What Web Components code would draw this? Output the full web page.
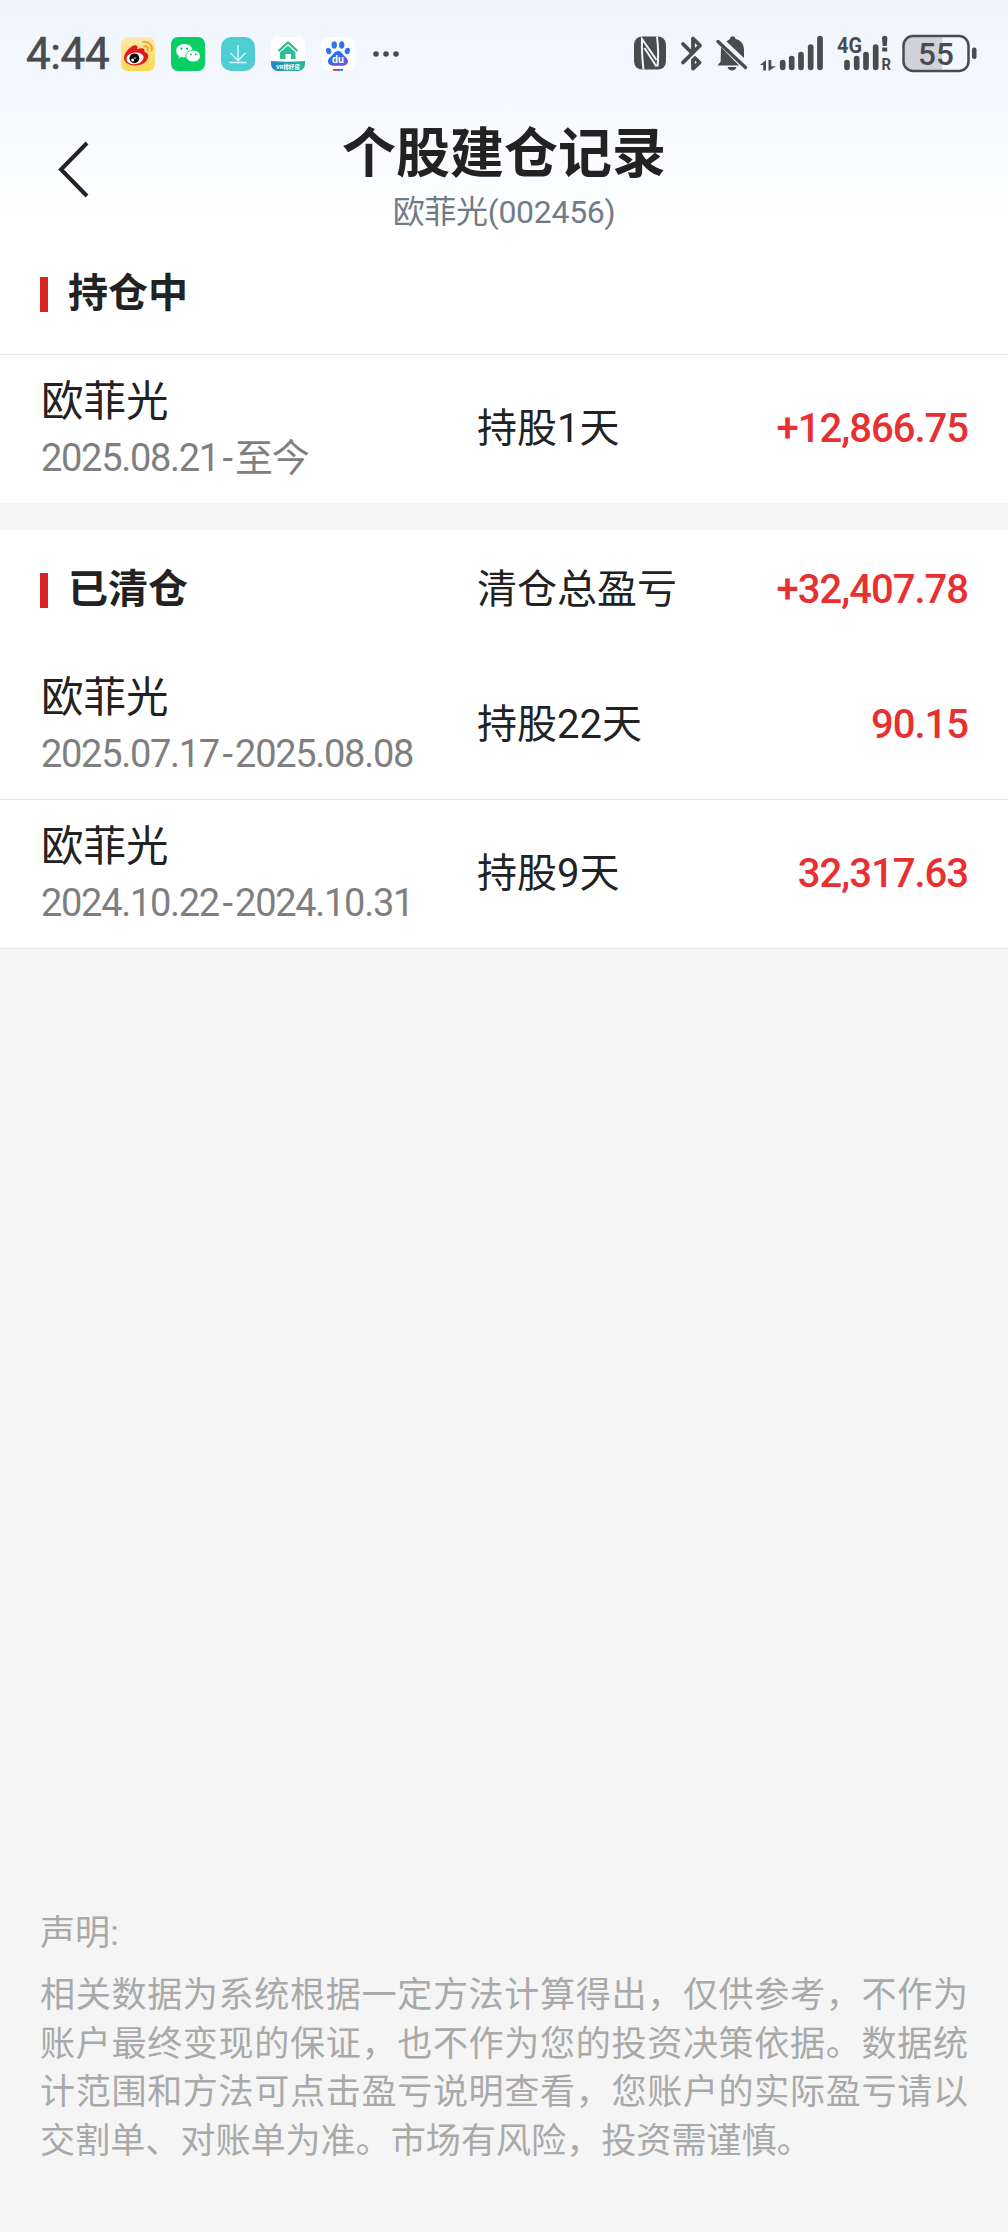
<!DOCTYPE html>
<html lang="zh-CN">
<head>
<meta charset="utf-8">
<title>个股建仓记录</title>
<style>
	body {
		margin: 0;
		background: #f5f5f5;
		color: #222;
		font-family: Roboto, 'Noto Sans CJK SC', sans-serif;
	}
</style>
</head>
<body>
<record-page>
	<status-bar slot="top" time="4:44" battery="55"></status-bar>
	<nav-bar slot="top" heading="个股建仓记录">欧菲光(002456)</nav-bar>

	<record-section heading="持仓中">
		<record-row class="ruled" name="欧菲光" period="2025.08.21-至今" days="持股1天" amount="+12,866.75"></record-row>
	</record-section>

	<record-section heading="已清仓" label="清仓总盈亏" total="+32,407.78">
		<record-row name="欧菲光" period="2025.07.17-2025.08.08" days="持股22天" amount="90.15"></record-row>
		<record-row class="ruled" name="欧菲光" period="2024.10.22-2024.10.31" days="持股9天" amount="32,317.63"></record-row>
	</record-section>

	<legal-note slot="bottom" heading="声明:">相关数据为系统根据一定方法计算得出，仅供参考，不作为账户最终变现的保证，也不作为您的投资决策依据。数据统计范围和方法可点击盈亏说明查看，您账户的实际盈亏请以交割单、对账单为准。市场有风险，投资需谨慎。</legal-note>
</record-page>

<script>
const APP_ICONS = {
	weibo: `
		<defs><linearGradient id="g" x2="0" y2="1"><stop stop-color="#fdeab0"/><stop offset="1" stop-color="#fdd651"/></linearGradient></defs>
		<rect width="34" height="34" rx="7" fill="url(#g)"/>
		<path d="M3 21C3 16 9 9.500 13 8.500c3-.7 4 1 3.300 3.700 4-1.700 8-1.200 7.200 2.600 3 .8 4.300 3.200 3.600 5.700C26 25.500 20 28.500 14 28.500 8 28.500 3 25.500 3 21Z" fill="#df1a1c"/>
		<ellipse cx="14" cy="21.300" rx="8.700" ry="5.800" transform="rotate(-8 14 21.300)" fill="#fff"/>
		<circle cx="13.400" cy="21.300" r="4.900" fill="#0d0909"/>
		<circle cx="11.700" cy="22.900" r="1.500" fill="#fff"/><circle cx="14.100" cy="21" r=".8" fill="#fff"/>
		<path d="M22.500 4.900c5.500-.6 9.200 3.500 8.200 8.700M23.200 9.200c2.900-.3 4.300 1.500 3.800 4" fill="none" stroke="#f3a52b" stroke-width="2" stroke-linecap="round"/>`,
	wechat: `
		<rect width="34" height="34" rx="7" fill="#07cf63"/>
		<path d="M13.300 7c-4.700 0-8.100 3-8.100 6.700 0 2.200 1.100 4 3 5.200l-.8 2.600 3-1.500c3 .8 10.800-.1 11.200-6.300C21.500 9.700 17.900 7 13.300 7Z" fill="#fff"/>
		<path d="M22.200 13.200c-4.200 0-7.300 2.600-7.300 5.900s3.300 6.100 7.500 5.900c.8 0 1.600-.2 2.500-.5l2.400 1.200-.6-2.200c1.700-1.100 2.800-2.600 2.800-4.400 0-3.300-3.200-5.900-7.300-5.900Z" fill="#fff" stroke="#07cf63" stroke-width=".9"/>
		<g fill="#07b957"><circle cx="10.500" cy="11.700" r="1.100"/><circle cx="16" cy="11.700" r="1.100"/><circle cx="20" cy="17.500" r=".9"/><circle cx="24.700" cy="17.500" r=".9"/></g>`,
	download: `
		<rect width="34" height="34" rx="10" fill="#4ecdd3"/>
		<path d="M17 8v15.500M9.500 16l7.500 7.500 7.500-7.500M8.500 25.500h17" fill="none" stroke="#d9fbfc" stroke-width="1.400"/>`,
	house: `
		<defs><clipPath id="c"><rect width="34" height="34" rx="7"/></clipPath><linearGradient id="b"><stop stop-color="#2384c6"/><stop offset="1" stop-color="#25b894"/></linearGradient></defs>
		<g clip-path="url(#c)"><rect width="34" height="34" fill="#fff"/>
		<path d="M0 24q17 1.500 34 0v10H0Z" fill="url(#b)"/></g>
		<path d="M7.500 14 17 5.500l9.500 8.500" fill="none" stroke="#2db793" stroke-width="2.200"/>
		<path d="m17 8.500 7.500 6.700V22H20v-5h-5.500v5H9v-6.800Z" fill="#2bc192"/>
		<text x="17" y="31.800" font-size="6.200" font-weight="700" fill="#fff" text-anchor="middle" textLength="24" lengthAdjust="spacingAndGlyphs">VR排好房</text>`,
	baidu: `
		<defs><linearGradient id="d" x2="1" y2="1"><stop offset=".3" stop-color="#2770ec"/><stop offset="1" stop-color="#8b4bd8"/></linearGradient></defs>
		<rect width="34" height="34" rx="7" fill="#fff"/>
		<g fill="#2e74ea"><ellipse cx="7.700" cy="14" rx="2.600" ry="3.300" transform="rotate(-15 7.700 14)"/><ellipse cx="13.200" cy="8" rx="2.700" ry="3.700"/><ellipse cx="20.700" cy="8" rx="2.700" ry="3.700"/><ellipse cx="26.300" cy="14" rx="2.600" ry="3.300" transform="rotate(15 26.300 14)"/></g>
		<path d="M17 14c3.300 0 4.500 3.200 7 5.400 2.600 2.200 3.800 4.200 2.600 6.800-1.500 3.200-5.600 2.500-9.600 2.500s-8.100.7-9.600-2.500c-1.200-2.600 0-4.600 2.600-6.800 2.500-2.200 3.700-5.400 7-5.400Z" fill="url(#d)"/>
		<text x="17" y="26.300" font-size="10.500" font-weight="700" fill="#fff" text-anchor="middle">du</text>
		<path d="M12 32.900h5" stroke="#dc3d40" stroke-width="2"/><path d="M17 32.900h5" stroke="#3d76d4" stroke-width="2"/>`,
}

class AppIcon extends HTMLElement {
	constructor() {
		super()
		this.attachShadow({ mode: 'open' })
	}

	connectedCallback() {
		this.shadowRoot.innerHTML = `
			<style>
				:host { display: block; width: 34px; height: 34px; }
				svg { display: block; }
			</style>
			<svg width="34" height="34" viewBox="0 0 34 34">${APP_ICONS[this.getAttribute('name')]}</svg>
		`
	}
}

class StatusBar extends HTMLElement {
	constructor() {
		super()
		this.attachShadow({ mode: 'open' })
	}

	connectedCallback() {
		const level = Number(this.getAttribute('battery'))

		this.shadowRoot.innerHTML = `
			<style>
				:host {
					display: flex;
					align-items: center;
					justify-content: space-between;
					height: 108px;
					padding: 0 31px 0 26px;
					box-sizing: border-box;
					color: #4a4b4d;
				}
				.left { display: flex; align-items: center; }
				.time {
					width: 95px;
					font-size: 44px;
					line-height: 48px;
					letter-spacing: -0.4px;
					-webkit-text-stroke: 0.6px currentColor;
				}
				.apps { display: flex; gap: 16px; }
				.more { margin-left: 17px; }
				svg { display: block; overflow: visible; }
				.right { display: flex; align-items: center; }
				.right svg { fill: currentColor; }
			</style>

			<div class="left">
				<span class="time">${this.getAttribute('time')}</span>
				<div class="apps">
					<app-icon name="weibo"></app-icon>
					<app-icon name="wechat"></app-icon>
					<app-icon name="download"></app-icon>
					<app-icon name="house"></app-icon>
					<app-icon name="baidu"></app-icon>
				</div>
				<svg class="more" width="28" height="8" fill="currentColor"><circle cx="4" cy="4" r="2.800"/><circle cx="14" cy="4" r="2.800"/><circle cx="24" cy="4" r="2.800"/></svg>
			</div>

			<div class="right">
				<!-- nfc -->
				<svg width="46" height="38" viewBox="0 0 46 38">
					<rect y="1.500" width="32" height="33" rx="8"/>
					<path d="M9.500 34.500Q7.500 18 8 4L22.500 25M10.500 13 22.500 31.500M23 1.500q2 16 .5 30" fill="none" stroke="#f2f6fd" stroke-width="2"/>
				</svg>
				<!-- bluetooth -->
				<svg width="36" height="38" viewBox="0 0 36 38"><path d="M3 27.500 20 10.500 13 3.500V17M3 9l8 8M13 25v8.500l6.500-6-4.500-4.500" fill="none" stroke="currentColor" stroke-width="3.800" stroke-linejoin="round" stroke-linecap="round"/></svg>
				<!-- muted bell -->
				<svg width="45" height="38" viewBox="0 0 45 38">
					<path d="M5 12 23 30.500H1.500l3.200-4ZM10.500 6.500Q12.500 4.500 14 3.900C14 .5 19.500.5 19.500 3.900 25 5 28 9 28 15v8ZM11.500 32h9q-1.200 3.500-4.500 3.500t-4.500-3.500Z"/>
					<path d="m2 6.500 27.500 26" stroke="currentColor" stroke-width="3.400" stroke-linecap="round"/>
				</svg>
				<!-- sim 1 -->
				<svg width="76" height="38" viewBox="0 0 76 38">
					<path d="M-1 30 5 25v10.500H2.200V30ZM7.500 25h2.800v6.200H15L7.500 36Z"/>
					<g stroke="currentColor" stroke-width="5.700" stroke-linecap="round"><path d="M21.700 27.500v4.800M30.700 23.500v8.800M40 19.500v12.800M49.700 12v20.300M59 3.500v28.800"/></g>
				</svg>
				<!-- sim 2 -->
				<svg width="65" height="38" viewBox="0 0 65 38">
					<text x="0" y="18" font-size="22" font-weight="700" textLength="25" lengthAdjust="spacingAndGlyphs">4G</text>
					<g stroke="currentColor" stroke-width="5.700" stroke-linecap="round"><path d="M10 27.500v4.800M19.700 23.500v8.800M29 19.500v12.800M38.700 12v20.300"/></g>
					<path d="M45 3.500q0-2.700 2.700-2.700t2.700 2.700l-.7 7.500h-4ZM45.200 12.500h5v4h-5Z"/>
					<text x="44.500" y="35" font-size="17" font-weight="700" textLength="9.500" lengthAdjust="spacingAndGlyphs">R</text>
				</svg>
				<!-- battery, the filled part follows the level -->
				<svg width="75" height="38" viewBox="0 0 75 38">
					<path d="M10 1.500h${(level * 0.62 - 4).toFixed(1)}v34H10q-8 0-8-8v-18q0-8 8-8Z" fill="#cfd2d8"/>
					<rect x="1.500" y="1" width="65" height="35" rx="9.500" fill="none" stroke="currentColor" stroke-width="2.500"/>
					<rect x="70" y="12.500" width="4.500" height="11.500" rx="2"/>
					<text x="34" y="30" font-size="31.500" font-weight="500" text-anchor="middle">${level}</text>
				</svg>
			</div>
		`
	}
}

class NavBar extends HTMLElement {
	constructor() {
		super()
		this.attachShadow({ mode: 'open' })
	}

	connectedCallback() {
		this.shadowRoot.innerHTML = `
			<style>
				:host {
					display: grid;
					grid-template-columns: 120px 1fr 120px;
					height: 126px;
				}
				.back { margin: 33px 0 0 57px; }
				.titles { padding-top: 11px; text-align: center; }
				h1 {
					margin: 0;
					font-size: 54px;
					font-weight: 700;
					line-height: 72px;
				}
				p {
					margin: 2px 0 0;
					color: #717b86;
					font-size: 32px;
					line-height: 38px;
					letter-spacing: -0.3px;
				}
			</style>
			<svg class="back" width="34" height="58" viewBox="0 0 34 58"><path d="M30 2 4 28.500 30 55" fill="none" stroke="#222" stroke-width="4"/></svg>
			<div class="titles">
				<h1>${this.getAttribute('heading')}</h1>
				<p><slot></slot></p>
			</div>
		`
	}
}

class RecordSection extends HTMLElement {
	constructor() {
		super()
		this.attachShadow({ mode: 'open' })
	}

	connectedCallback() {
		this.shadowRoot.innerHTML = `
			<style>
				:host { display: block; }
				header {
					display: grid;
					grid-template-columns: 437px 1fr auto;
					align-items: center;
					height: 120px;
					padding: 0 40px;
					font-size: 40px;
					line-height: 48px;
				}
				h2 {
					display: flex;
					align-items: center;
					gap: 20px;
					margin: 0;
					font-size: 40px;
				}
				h2::before {
					content: '';
					width: 8px;
					height: 35px;
					background: #d92424;
				}
				.total {
					color: #e83033;
					font-weight: 500;
					letter-spacing: var(--amount-spacing);
				}
			</style>
			<header>
				<h2>${this.getAttribute('heading')}</h2>
				<span>${this.getAttribute('label') || ''}</span>
				<span class="total">${this.getAttribute('total') || ''}</span>
			</header>
			<slot></slot>
		`
	}
}

class RecordRow extends HTMLElement {
	constructor() {
		super()
		this.attachShadow({ mode: 'open' })
	}

	connectedCallback() {
		this.shadowRoot.innerHTML = `
			<style>
				:host {
					display: grid;
					grid-template-columns: 437px 1fr auto;
					align-items: center;
					height: 149px;
					padding: 0 40px;
					box-sizing: border-box;
					border-top: 1px solid transparent;
					font-size: 40px;
					line-height: 48px;
				}
				:host(.ruled) { border-color: #e6e6e6; }
				.who { padding: 2px 0 0 1px; }
				.name { font-size: 42.500px; line-height: 56px; }
				.period {
					color: #7f7f7f;
					font-size: 38px;
					line-height: 56px;
					letter-spacing: -1.3px;
				}
				.dash { padding: 0 3.500px; }
				.amount {
					color: #e83033;
					font-weight: 500;
					letter-spacing: var(--amount-spacing);
				}
			</style>
			<div class="who">
				<div class="name">${this.getAttribute('name')}</div>
				<div class="period">${this.getAttribute('period').replace('-', '<span class="dash">-</span>')}</div>
			</div>
			<span>${this.getAttribute('days')}</span>
			<span class="amount">${this.getAttribute('amount')}</span>
		`
	}
}

class LegalNote extends HTMLElement {
	constructor() {
		super()
		this.attachShadow({ mode: 'open' })
	}

	connectedCallback() {
		this.shadowRoot.innerHTML = `
			<style>
				:host {
					display: block;
					padding: 0 40px 67px;
					color: #a9a9a9;
					font-size: 35.100px;
					line-height: 48.400px;
				}
				h3 { margin: 0 0 14px; font: inherit; }
				p { margin: 0; text-align: justify; }
			</style>
			<h3>${this.getAttribute('heading')}</h3>
			<p><slot></slot></p>
		`
	}
}

class RecordPage extends HTMLElement {
	constructor() {
		super()
		this.attachShadow({ mode: 'open' })

		this.shadowRoot.innerHTML = `
			<style>
				:host {
					display: flex;
					flex-direction: column;
					width: 1008px;
					height: 2232px;
					--amount-spacing: -1px;
				}
				.top { background: linear-gradient(#eff4fd, #fff); }
				.sections {
					display: flex;
					flex-direction: column;
					gap: 27px;
					border-bottom: 1px solid #e6e6e6;
				}
				::slotted(record-section) { background: #fff; }
				.bottom { margin-top: auto; }
			</style>
			<div class="top"><slot name="top"></slot></div>
			<div class="sections"><slot></slot></div>
			<div class="bottom"><slot name="bottom"></slot></div>
		`
	}
}

customElements.define('app-icon', AppIcon)
customElements.define('status-bar', StatusBar)
customElements.define('nav-bar', NavBar)
customElements.define('record-section', RecordSection)
customElements.define('record-row', RecordRow)
customElements.define('legal-note', LegalNote)
customElements.define('record-page', RecordPage)
</script>
</body>
</html>
